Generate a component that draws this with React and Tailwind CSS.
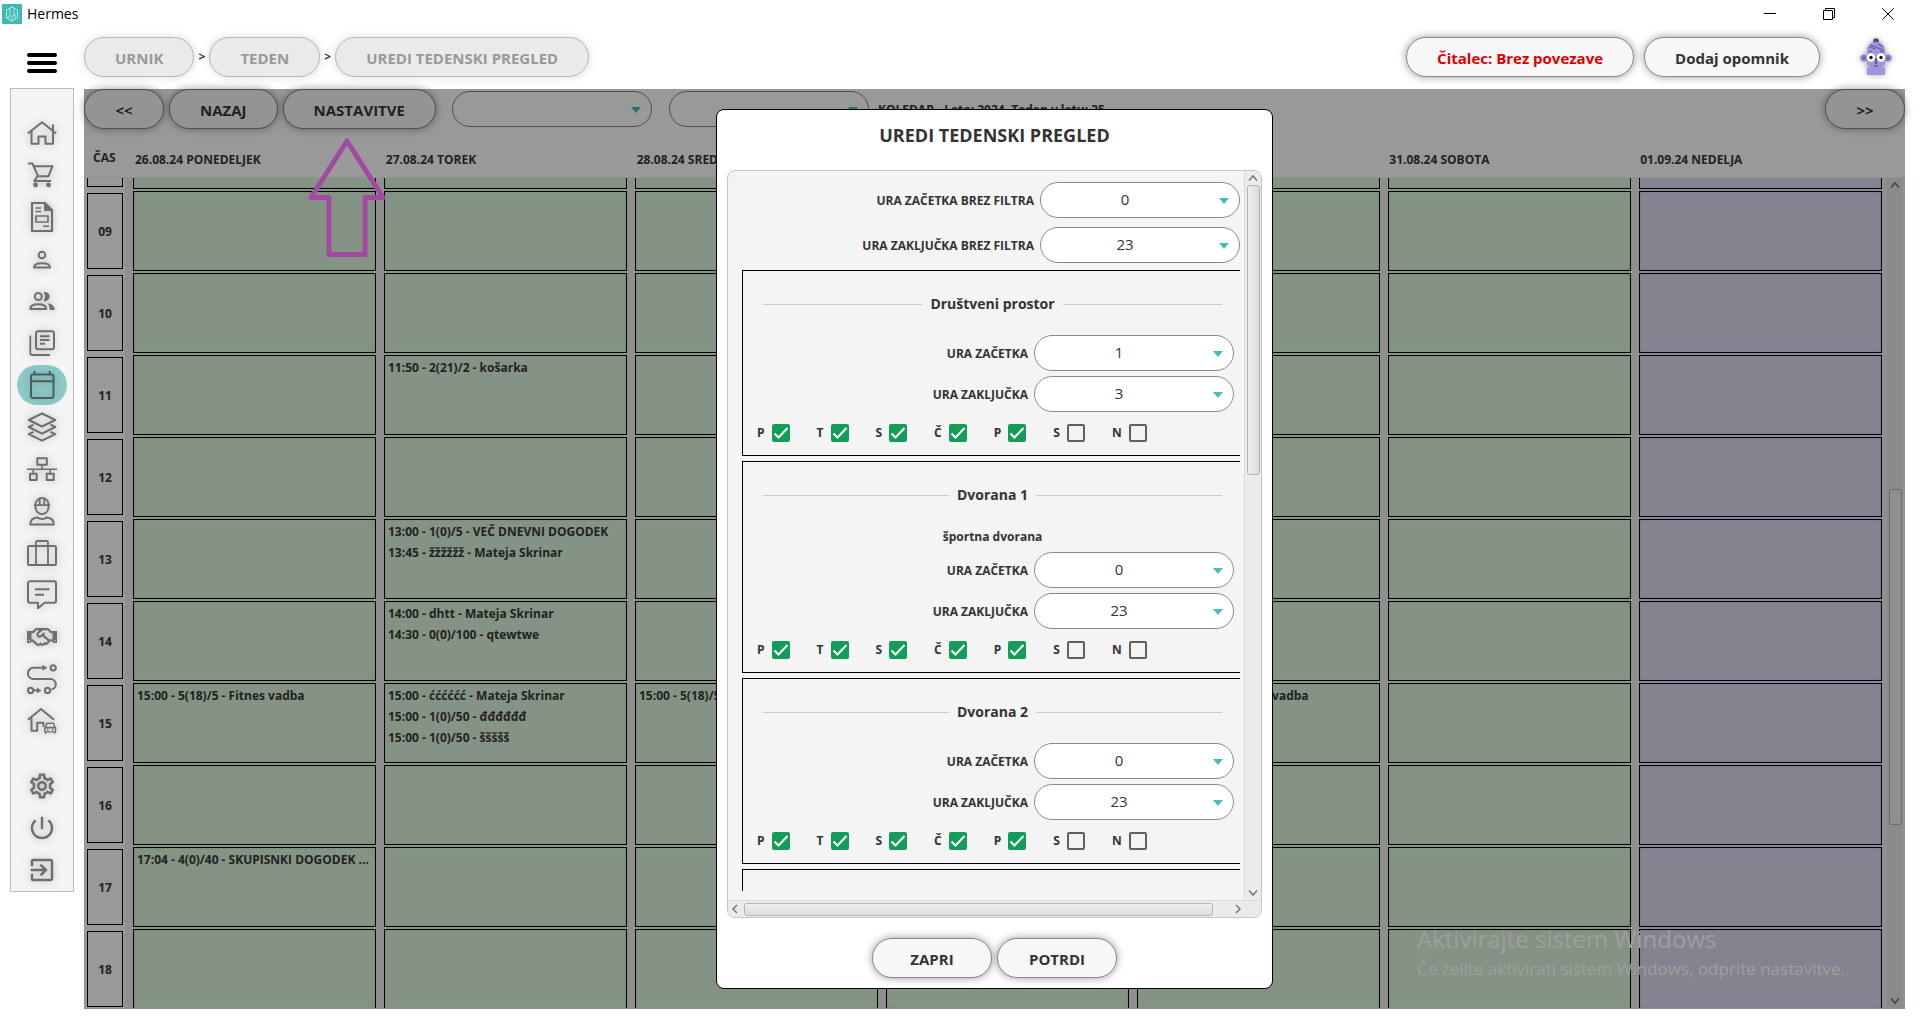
import React, { useState } from "react";
import { FaRegHandshake } from "react-icons/fa";
import { MdExitToApp, MdOutlineSettings, MdPowerSettingsNew } from "react-icons/md";
import clsx from "clsx";

/* ---------------- DATA ---------------- */

// the first row is scrolled almost out of view, so it carries no label
const HOURS = ["", "09", "10", "11", "12", "13", "14", "15", "16", "17", "18"];

const DAYS = [
  {
    title: "26.08.24 PONEDELJEK",
    events: {
      15: ["15:00 - 5(18)/5 - Fitnes vadba"],
      17: ["17:04 - 4(0)/40 - SKUPISNKI DOGODEK ..."],
    },
  },
  {
    title: "27.08.24 TOREK",
    events: {
      11: ["11:50 - 2(21)/2 - košarka"],
      13: ["13:00 - 1(0)/5 - VEČ DNEVNI DOGODEK", "13:45 - žžžžžž - Mateja Skrinar"],
      14: ["14:00 - dhtt - Mateja Skrinar", "14:30 - 0(0)/100 - qtewtwe"],
      15: [
        "15:00 - ćććććć - Mateja Skrinar",
        "15:00 - 1(0)/50 - đđđđđđ",
        "15:00 - 1(0)/50 - ššššš",
      ],
    },
  },
  { title: "28.08.24 SREDA", events: { 15: ["15:00 - 5(18)/5 - Fitnes vadba"] } },
  { title: "29.08.24 ČETRTEK", events: {} },
  { title: "30.08.24 PETEK", events: { 15: ["15:00 - 5(18)/5 - Fitnes vadba"] } },
  { title: "31.08.24 SOBOTA", events: {} },
  { title: "01.09.24 NEDELJA", events: {}, sunday: true },
];

const ROOMS = [
  { id: "prostor", name: "Društveni prostor", start: "1", end: "3" },
  { id: "dvorana1", name: "Dvorana 1", note: "športna dvorana", start: "0", end: "23" },
  { id: "dvorana2", name: "Dvorana 2", start: "0", end: "23" },
];

const WEEKDAYS = ["P", "T", "S", "Č", "P", "S", "N"];

/* ---------------- ICONS ---------------- */

const Icon = ({ children }) => (
  <svg
    viewBox="0 0 30 30"
    className="w-[30px] h-[30px]"
    fill="none"
    stroke="currentColor"
    strokeWidth="2"
    strokeLinejoin="round"
  >
    {children}
  </svg>
);

const HomeIcon = () => (
  <Icon>
    <path d="M.8 15.5 15 4.2l14.2 11.3" />
    <path d="M4.5 13v12.7h7v-7.2h7v7.2H26V6.5" />
  </Icon>
);

const CartIcon = () => (
  <Icon>
    <path d="M1 3.5h4.5L11 16.2h10.5l4-10H7M10.5 16.2 7.3 21H24" />
    <circle cx="8.5" cy="25" r="2.4" fill="currentColor" stroke="none" />
    <circle cx="21.5" cy="25" r="2.4" fill="currentColor" stroke="none" />
  </Icon>
);

const InvoiceIcon = () => (
  <Icon>
    <path d="M5 1h13l7 7v21H5z" strokeWidth="2.2" />
    <path d="M17.5 1v7.5H25z" fill="currentColor" strokeWidth="1" />
    <path d="M8.5 6H14M8.5 9.5H14M16 24.3h6" strokeWidth="1.5" />
    <path d="M9 14h12v6H9z" strokeWidth="1.7" />
  </Icon>
);

const PersonIcon = () => (
  <Icon>
    <circle cx="15" cy="11" r="3.3" />
    <path d="M7 23.4c0-3 3.5-4.2 8-4.2s8 1.200 8 4.200z" />
  </Icon>
);

const PeopleIcon = () => (
  <Icon>
    <circle cx="11.3" cy="10.5" r="3.5" />
    <path d="M3.2 23c0-3.200 3.600-4.800 8-4.800s8 1.600 8 4.800z" />
    <path d="M16.5 6.200a4.600 4.600 0 1 1 0 8.700c2-2.600 2-6 0-8.700z" fill="currentColor" stroke="none" />
    <path d="M20.300 17.300c4.600.6 7.400 2.700 7.400 6.700h-5c0-3-.7-5-2.400-6.700z" fill="currentColor" stroke="none" />
  </Icon>
);

const LibraryIcon = () => (
  <Icon>
    <rect x="9" y="3.3" width="18" height="18" rx="2" />
    <path d="M3.3 7.5V25a2 2 0 0 0 2 2H23" strokeWidth="1.8" />
    <path d="M13 8.3h9.500M13 12h9.500M13 15.700h5" />
  </Icon>
);

const CalendarIcon = () => (
  <Icon>
    <rect x="4" y="4.5" width="22.5" height="23.5" rx="2" />
    <path d="M4 11.200h22.500M7.500 1v4M22.800 1v4" />
  </Icon>
);

const LayersIcon = () => (
  <Icon>
    <path d="M15 1.500 28.300 8 15 14.500 1.700 8z" />
    <path d="M6.500 12.700 1.700 15 15 21.700 28.300 15l-4.800-2.300" />
    <path d="M6.500 19.800 1.700 22.100 15 28.700l13.300-6.600-4.800-2.300" />
  </Icon>
);

const NetworkIcon = () => (
  <Icon>
    <path d="M10.300 4.300h9.500v6.500h-9.500zM3 19.700h6.700v6.300H3zM19.700 19.700h7V26h-7z" />
    <path d="M0 15.300h30M15 11v4.300M6.300 15.300v4M23.200 15.300v4" strokeWidth="1.6" />
  </Icon>
);

const WorkerIcon = () => (
  <Icon>
    <path d="M8.500 9v2.500a6.500 6.500 0 0 0 13 0V9" />
    <path d="M8.500 8.500a6.500 6.500 0 0 1 13 0M7 9.200h16M12.700 2.500v6M17.300 2.500v6" strokeWidth="1.8" />
    <path d="M3.200 28.500c0-4 1.800-6.500 7.300-7 2.500 2 6.500 2 9 0 5.500.5 7.300 3 7.300 7z" />
  </Icon>
);

const LuggageIcon = () => (
  <Icon>
    <rect x="1" y="8" width="28" height="19" rx="1.5" />
    <path d="M9 27V4.500a1.500 1.500 0 0 1 1.500-1.500h9A1.500 1.500 0 0 1 21 4.500V27" strokeWidth="1.8" />
  </Icon>
);

const ChatIcon = () => (
  <Icon>
    <path d="M3 1.300h24a2 2 0 0 1 2 2v17.400a2 2 0 0 1-2 2H17.500L11 28.200v-5.500H3a2 2 0 0 1-2-2V3.300a2 2 0 0 1 2-2z" />
    <path d="M8 9.200h14.500M8 14.800h9" />
  </Icon>
);

const RouteIcon = () => (
  <Icon>
    <path d="M16 3.800H6.500a5.600 5.600 0 0 0 0 11.200h17a5.300 5.300 0 0 1 1 10.500" />
    <path d="M15.500.8l5 3-5 3zM10 23.500l4.500 2.900-4.500 2.900z" fill="currentColor" stroke="none" />
    <circle cx="26.2" cy="3.8" r="2.6" />
    <circle cx="3.6" cy="26.4" r="2.6" />
    <circle cx="20.5" cy="26.4" r="2.6" />
    <path d="M6.500 26.400H11" />
  </Icon>
);

const GarageIcon = () => (
  <Icon>
    <path d="M1 13.800 14 3l13 10.800" />
    <path d="M4.500 12v12.700h5.700v-8h6.300V21" />
    <path d="M18.500 21.500l1.400-4.200h6.600l1.400 4.200zM17.800 21.700h10.800v4.200H17.800z" strokeWidth="1.4" />
    <path d="M18.700 26v1.800M27.700 26v1.800M20 23.800h1.500M25 23.800h1.500" strokeWidth="1.4" />
  </Icon>
);

const HermesLogo = () => (
  <svg viewBox="0 0 20 20" className="w-5 h-5" fill="none" stroke="#b9ebe7" strokeWidth="1">
    <rect width="20" height="20" fill="#3fbab3" stroke="none" />
    <path d="M4.500 6 10 3l5.500 3v8L10 17l-5.500-3z" />
    <path d="M8 4.500v8L5 14M10 17v-5l3-2v5M12 4.500v5" />
  </svg>
);

const Avatar = () => (
  <svg viewBox="0 0 32 38" className="w-8 h-[38px] drop-shadow-[0_0_3px_rgba(0,0,0,0.35)]">
    <circle cx="16" cy="3" r="2.8" fill="#51468a" />
    <circle cx="4" cy="20" r="3.6" fill="#8e80c9" />
    <circle cx="28" cy="20" r="3.6" fill="#8e80c9" />
    <path d="M7 37V13c0-5 3-9 9-9s9 4 9 9v24z" fill="#a094dc" />
    <path d="M9 9l7 2M10 7l13 5M18 6l5 3M9 14l3-1M20 14l4-1" stroke="#5d5196" strokeWidth="1" />
    <circle cx="11" cy="19.5" r="4.3" fill="#fff" />
    <circle cx="21" cy="19.5" r="4.3" fill="#fff" />
    <circle cx="11" cy="19.5" r="1.7" fill="#111" />
    <circle cx="21" cy="19.5" r="1.7" fill="#111" />
    <path d="M16 20v6M14.500 28h3" stroke="#3a3168" strokeWidth="1.2" />
    <circle cx="4" cy="20" r="1" fill="#4b4080" />
    <circle cx="28" cy="20" r="1" fill="#4b4080" />
    <path d="M8 27v3M24 27v3" stroke="#dcd6f7" strokeWidth="1" />
  </svg>
);

const Chevron = ({ d }) => (
  <svg viewBox="0 0 10 10" className="w-2.5 h-2.5 shrink-0" fill="none" stroke="currentColor" strokeWidth="1.5">
    <path d={d} />
  </svg>
);

const UP = "M1 7.5 5 3l4 4.5";
const DOWN = "M1 2.5 5 7l4-4.5";
const LEFT = "M7 1 3 5l4 4";
const RIGHT = "M3 1l4 4-4 4";

/* ---------------- SMALL PARTS ---------------- */

const PillButton = ({ className, children, ...rest }) => (
  <button
    type="button"
    className={clsx(
      "h-10 pt-0.5 shrink-0 rounded-full border text-[15px] font-bold whitespace-nowrap",
      className
    )}
    {...rest}
  >
    {children}
  </button>
);

const LIGHT = "border-[#8a8a8a] bg-[#f7f7f7] shadow-[0_0_8px_rgba(0,0,0,0.4)]";
const CRUMB = "border-[#b9b9b9] bg-[#eaeaea] text-[#999] px-[30px] shadow-[0_0_8px_rgba(0,0,0,0.15)]";
const DIMMED = "border-[#505050] bg-[#949494] text-[#1f1f1f] shadow-[0_0_8px_rgba(0,0,0,0.4)]";

const HourSelect = ({ id, value, dimmed, label }) => {
  const [current, setCurrent] = useState(value);

  return (
    <div className="relative w-[200px] h-9 shrink-0">
      <select
        id={id}
        aria-label={label}
        value={current}
        onChange={(e) => setCurrent(e.target.value)}
        className={clsx(
          "appearance-none w-full h-full rounded-full border pl-0.5 pr-8 pb-0.5 text-[15px] [text-align-last:center]",
          dimmed ? "border-[#505050] bg-[#999]" : "border-[#8a8a8a] bg-white text-[#333]"
        )}
      >
        {dimmed && <option value=""></option>}
        {Array.from({ length: 24 }, (_, h) => (
          <option key={h} value={String(h)}>
            {h}
          </option>
        ))}
      </select>
      <svg
        viewBox="0 0 10 6"
        className={clsx(
          "absolute right-[11px] top-4 w-2.5 h-1.5 pointer-events-none",
          dimmed ? "text-[#2a716d]" : "text-[#45bdb5]"
        )}
      >
        <path d="M0 0h10L5 6z" fill="currentColor" />
      </svg>
    </div>
  );
};

const LabeledSelect = ({ id, text, value }) => (
  <div className="flex items-center justify-end gap-1.5">
    <label htmlFor={id} className="pt-0.5 text-xs font-bold">
      {text}
    </label>
    <HourSelect id={id} value={value} />
  </div>
);

const DayCheck = ({ id, day, checked }) => {
  const [on, setOn] = useState(checked);

  return (
    <div className="flex items-center gap-[7px]">
      <label htmlFor={id} className="text-xs leading-[18px] font-bold">
        {day}
      </label>
      <span className="relative flex">
        <input
          id={id}
          type="checkbox"
          checked={on}
          onChange={() => setOn(!on)}
          className="peer appearance-none w-[18px] h-[18px] rounded-[2px] border-2 border-[#606060] checked:border-[#129e58] checked:bg-[#129e58]"
        />
        <svg
          viewBox="0 0 18 18"
          className="absolute inset-0 w-[18px] h-[18px] pointer-events-none opacity-0 peer-checked:opacity-100"
          fill="none"
          stroke="#fff"
          strokeWidth="2"
        >
          <path d="M2.500 9.500 6.500 13.500 15.500 4" />
        </svg>
      </span>
    </div>
  );
};

const RoomSettings = ({ room }) => (
  <section className="w-[501px] shrink-0 border border-black pt-[21px] pb-[13px]">
    <h3 className="flex items-center gap-2 h-6 px-5 text-sm font-bold">
      <span className="flex-1 h-px bg-[#cbcbcb]" />
      {room.name}
      <span className="flex-1 h-px bg-[#cbcbcb]" />
    </h3>
    <div className="mt-[19px] pr-2 flex flex-col gap-[5px]">
      {room.note && (
        <p className="h-[21px] pl-2 text-xs leading-[22px] font-bold text-center">{room.note}</p>
      )}
      <LabeledSelect id={room.id + "-start"} text="URA ZAČETKA" value={room.start} />
      <LabeledSelect id={room.id + "-end"} text="URA ZAKLJUČKA" value={room.end} />
    </div>
    <div className="mt-3 pl-3.5 flex gap-[27px]">
      {WEEKDAYS.map((day, i) => (
        <DayCheck key={i} id={room.id + "-day-" + i} day={day} checked={i < 5} />
      ))}
    </div>
  </section>
);

/* ---------------- SIDEBAR ---------------- */

const NAV = [
  { label: "Domov", icon: <HomeIcon /> },
  { label: "Prodaja", icon: <CartIcon /> },
  { label: "Računi", icon: <InvoiceIcon /> },
  { label: "Stranka", icon: <PersonIcon /> },
  { label: "Stranke", icon: <PeopleIcon /> },
  { label: "Šifranti", icon: <LibraryIcon /> },
  { label: "Urnik", icon: <CalendarIcon />, active: true },
  { label: "Sloji", icon: <LayersIcon /> },
  { label: "Omrežje", icon: <NetworkIcon /> },
  { label: "Delavci", icon: <WorkerIcon /> },
  { label: "Prtljaga", icon: <LuggageIcon /> },
  { label: "Sporočila", icon: <ChatIcon /> },
  { label: "Partnerji", icon: <FaRegHandshake size={30} /> },
  { label: "Poti", icon: <RouteIcon /> },
  { label: "Objekti", icon: <GarageIcon /> },
];

const NAV_BOTTOM = [
  { label: "Nastavitve", icon: <MdOutlineSettings size={30} /> },
  { label: "Izklop", icon: <MdPowerSettingsNew size={30} /> },
  { label: "Odjava", icon: <MdExitToApp size={30} /> },
];

const NavButton = ({ item }) => (
  <button
    type="button"
    aria-label={item.label}
    className={clsx(
      "w-[50px] h-10 flex items-center justify-center rounded-full",
      item.active ? "bg-[#8dcac8] text-[#47605e]" : "text-[#6f6f6f]"
    )}
  >
    <span className="drop-shadow-[0_0_4px_rgba(0,0,0,0.25)]">{item.icon}</span>
  </button>
);

const Sidebar = () => (
  <nav className="ml-2.5 mr-2.5 -mt-px w-16 shrink-0 self-start border border-[#bdbdbd] bg-[#f4f4f4] pt-6 pb-px flex flex-col items-center gap-0.5">
    {NAV.map((item) => (
      <NavButton key={item.label} item={item} />
    ))}
    <div className="mt-[23px] flex flex-col gap-0.5">
      {NAV_BOTTOM.map((item) => (
        <NavButton key={item.label} item={item} />
      ))}
    </div>
  </nav>
);

/* ---------------- HEADER ---------------- */

const TitleBar = () => (
  <div className="h-[27px] shrink-0 flex items-center pl-0.5 pr-[26px] text-black">
    <HermesLogo />
    <span className="ml-[5px] text-sm">Hermes</span>
    <div className="ml-auto flex gap-[47px]">
      <button type="button" aria-label="Pomanjšaj">
        <svg viewBox="0 0 12 12" className="w-3 h-3" stroke="currentColor" fill="none">
          <path d="M0 5.500h12" />
        </svg>
      </button>
      <button type="button" aria-label="Obnovi">
        <svg viewBox="0 0 12 12" className="w-3 h-3" stroke="currentColor" fill="none">
          <path d="M.5 2.500h9v9h-9zM2.500 2.500v-2h9v9h-2" />
        </svg>
      </button>
      <button type="button" aria-label="Zapri okno">
        <svg viewBox="0 0 12 12" className="w-3 h-3" stroke="currentColor" fill="none">
          <path d="M.3.3l11.400 11.400M11.700.3.3 11.700" />
        </svg>
      </button>
    </div>
  </div>
);

const Header = () => (
  <header className="shrink-0 flex items-start pt-2.5 pr-7">
    <button type="button" aria-label="Meni" className="w-[84px] h-[52px] pl-[27px] flex items-center">
      <svg viewBox="0 0 30 20" className="w-[30px] h-5" stroke="#000" strokeWidth="4" strokeLinecap="round">
        <path d="M2 2h26M2 10h26M2 18h26" />
      </svg>
    </button>
    <div className="flex items-center">
      <PillButton className={CRUMB}>URNIK</PillButton>
      <span className="w-[15px] text-center text-xs font-bold">&gt;</span>
      <PillButton className={CRUMB}>TEDEN</PillButton>
      <span className="w-[15px] text-center text-xs font-bold">&gt;</span>
      <PillButton className={CRUMB}>UREDI TEDENSKI PREGLED</PillButton>
    </div>
    <div className="ml-auto flex items-center">
      <PillButton className={clsx(LIGHT, "px-[30px] text-[#e00000]")}>Čitalec: Brez povezave</PillButton>
      <PillButton className={clsx(LIGHT, "ml-2.5 px-[30px]")}>Dodaj opomnik</PillButton>
      <button type="button" aria-label="Uporabnik" className="ml-10">
        <Avatar />
      </button>
    </div>
  </header>
);

/* ---------------- CALENDAR ---------------- */

const DayColumn = ({ day }) => (
  <div className={clsx("flex-1 min-w-0 flex flex-col gap-0.5", day.sunday ? "bg-[#8b8b93]" : "bg-[#879585]")}>
    {HOURS.map((hour) => (
      <div
        key={hour}
        className={clsx(
          "h-20 shrink-0 border border-black pt-px pl-[3px] overflow-hidden",
          day.sunday
            ? "bg-[#848491] shadow-[inset_0_0_2px_#6a6a9c]"
            : "bg-[#859384] shadow-[inset_0_0_2px_#5f8f5c]"
        )}
      >
        {(day.events[hour] || []).map((text) => (
          <p key={text} className="text-xs leading-[21px] font-bold whitespace-nowrap text-[#222]">
            {text}
          </p>
        ))}
      </div>
    ))}
  </div>
);

const Calendar = () => (
  <div className="h-full flex flex-col bg-[#999] text-[#222]">
    <div className="flex items-center h-10 shrink-0">
      <PillButton className={clsx(DIMMED, "w-20")}>&lt;&lt;</PillButton>
      <PillButton className={clsx(DIMMED, "ml-[5px] px-[30px]")}>NAZAJ</PillButton>
      <PillButton className={clsx(DIMMED, "ml-[5px] mr-4 px-[30px]")}>NASTAVITVE</PillButton>
      <HourSelect label="Filter prostora" value="" dimmed />
      <div className="w-[17px] shrink-0" />
      <HourSelect label="Filter vadbe" value="" dimmed />
      <span className="ml-[9px] pt-0.5 text-xs font-bold whitespace-nowrap">
        KOLEDAR - Leto: 2024, Teden v letu: 35
      </span>
      <PillButton className={clsx(DIMMED, "ml-auto w-20")}>&gt;&gt;</PillButton>
    </div>

    <div className="h-12 shrink-0 pt-2.5 flex items-center text-xs font-bold">
      <div className="w-[49px] pl-[9px]">ČAS</div>
      <div className="flex-1 flex gap-2 pt-1 pl-0.5 pr-[22px]">
        {DAYS.map((day) => (
          <div key={day.title} className="flex-1 min-w-0 whitespace-nowrap">
            {day.title}
          </div>
        ))}
      </div>
    </div>

    <div className="flex-1 min-h-0 flex border border-r-2 border-[#869986] bg-[#8f8f8f] overflow-hidden">
      <div className="w-10 shrink-0 bg-[#999] pl-0.5 pr-0.5 -mt-[67px] flex flex-col gap-1.5">
        {HOURS.map((hour) => (
          <div
            key={hour}
            className="h-[76px] shrink-0 pt-0.5 border border-black flex items-center justify-center text-xs font-bold"
          >
            {hour}
          </div>
        ))}
      </div>
      <div className="flex-1 min-w-0 pl-2 pr-[5px] -mt-[69px] flex gap-2">
        {DAYS.map((day) => (
          <DayColumn key={day.title} day={day} />
        ))}
      </div>
      <div className="w-4 shrink-0 py-0.5 bg-[#8a8a8a] text-[#444] flex flex-col items-center">
        <Chevron d={UP} />
        <div className="flex-[300] w-3" />
        <div className="flex-[335] w-[13px] rounded-[3px] border border-[#6c6c6c] bg-[#8f8f8f]" />
        <div className="flex-[171] w-3" />
        <Chevron d={DOWN} />
      </div>
    </div>
  </div>
);

/* ---------------- DIALOG ---------------- */

const SettingsDialog = () => (
  <div
    role="dialog"
    aria-labelledby="dialog-title"
    className="w-[557px] flex flex-col rounded-lg border border-black bg-white text-[#333]"
  >
    <h2 id="dialog-title" className="h-[60px] pb-2.5 shrink-0 flex items-center justify-center text-lg font-bold">
      UREDI TEDENSKI PREGLED
    </h2>

    <div className="flex-1 min-h-0 mx-2.5 rounded-lg border border-[#c4c4c4] bg-[#f4f4f4] flex flex-col overflow-hidden">
      <div className="flex-1 min-h-0 flex">
        <div className="flex-1 min-w-0 ml-3.5 mr-1 mt-[11px] mb-[9px] overflow-hidden flex flex-col">
          <div className="flex flex-col gap-[9px]">
            <LabeledSelect id="all-start" text="URA ZAČETKA BREZ FILTRA" value="0" />
            <LabeledSelect id="all-end" text="URA ZAKLJUČKA BREZ FILTRA" value="23" />
          </div>
          <div className="flex-1 min-h-0 mt-[7px] flex flex-col gap-[5px]">
            {ROOMS.map((room) => (
              <RoomSettings key={room.id} room={room} />
            ))}
            {/* top edge of the next room */}
            <div className="flex-1 w-[501px] border border-b-0 border-black" />
          </div>
        </div>
        <div className="w-[17px] shrink-0 py-0.5 border-l border-[#dcdcdc] bg-[#ebebeb] text-[#777] flex flex-col items-center">
          <Chevron d={UP} />
          <div className="mt-0.5 flex-[288] w-[13px] rounded-[3px] border border-[#b5b5b5] bg-linear-to-r from-[#f0f0f0] to-[#dcdcdc]" />
          <div className="flex-[414] w-3" />
          <Chevron d={DOWN} />
        </div>
      </div>
      <div className="h-[17px] shrink-0 border-t border-[#dcdcdc] bg-[#ebebeb] pl-0.5 pr-[18px] text-[#777] flex items-center">
        <Chevron d={LEFT} />
        <div className="ml-1 flex-[471] h-[13px] rounded-[3px] border border-[#b5b5b5] bg-linear-to-b from-[#f0f0f0] to-[#dcdcdc]" />
        <div className="flex-[20]" />
        <Chevron d={RIGHT} />
      </div>
    </div>

    <div className="shrink-0 pt-5 pb-2.5 flex justify-center gap-[5px]">
      <PillButton className={clsx(LIGHT, "w-[120px]")}>ZAPRI</PillButton>
      <PillButton className={clsx(LIGHT, "w-[120px]")}>POTRDI</PillButton>
    </div>
  </div>
);

/* ---------------- APP ---------------- */

const App = () => {
  return (
    <div className="h-screen flex flex-col overflow-hidden bg-white text-[#333] font-['Open_Sans','Noto_Sans',sans-serif]">
      <TitleBar />
      <Header />
      <div className="flex-1 min-h-0 flex pr-[15px] pb-[17px]">
        <Sidebar />
        <main className="relative flex-1 min-w-0">
          <Calendar />

          {/* arrow pointing at NASTAVITVE */}
          <svg
            viewBox="0 0 80 120"
            className="absolute left-[223px] top-12 w-20 h-[120px] pointer-events-none"
            fill="none"
            stroke="#a349a4"
            strokeWidth="5"
            strokeLinejoin="round"
          >
            <path d="M40 4 4 60.500h18v57h36v-57h18z" />
          </svg>

          <div className="absolute right-[60px] bottom-[26px] text-[#9ca09c] pointer-events-none">
            <p className="text-2xl leading-8">Aktivirajte sistem Windows</p>
            <p className="text-[17px] leading-7">Če želite aktivirati sistem Windows, odprite nastavitve.</p>
          </div>

          <div className="absolute inset-0 flex justify-center py-5">
            <SettingsDialog />
          </div>
        </main>
      </div>
    </div>
  );
};

export default App;
